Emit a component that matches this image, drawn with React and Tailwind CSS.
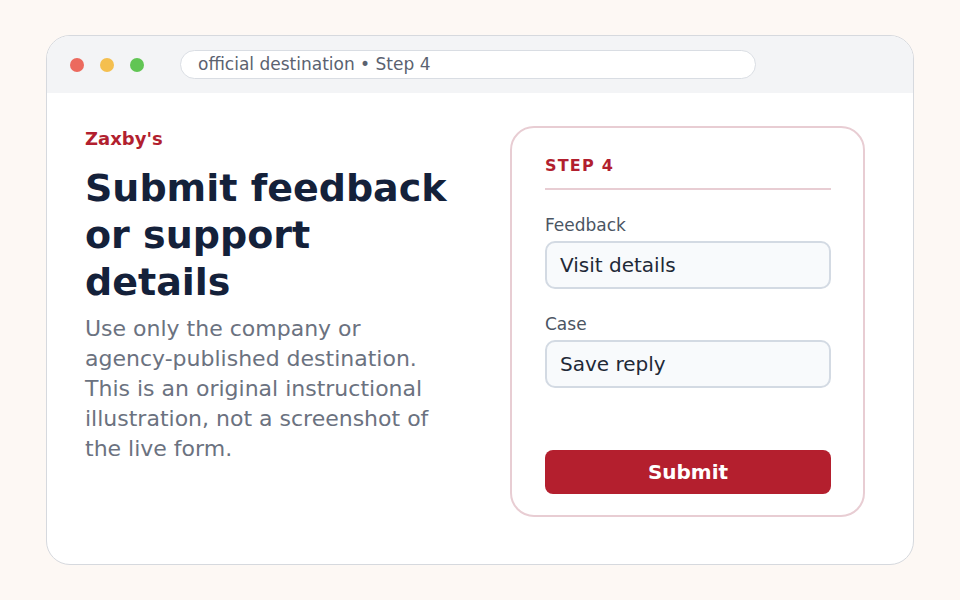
import React from "react";

const font = { fontFamily: '"DejaVu Sans", "Liberation Sans", sans-serif' };

const Field = ({ label, value, className = "" }) => (
  <div className={className}>
    <div className="text-[17px] leading-[24px] text-[#4b5563]">{label}</div>
    <div className="mt-[4px] h-[48px] rounded-[10px] border-2 border-[#d3dae3] bg-[#f8fafc] px-[13px] flex items-center text-[20px] text-[#1f2937]">
      {value}
    </div>
  </div>
);

const App = () => {
  return (
    <div
      className="w-full h-screen bg-[#fdf8f4] flex items-center justify-center"
      style={font}
    >
      <div className="w-[868px] h-[530px] rounded-[24px] border border-[#d6d9de] bg-white overflow-hidden flex flex-col">
        {/* browser bar */}
        <div className="h-[57px] bg-[#f3f4f6] flex items-center pl-[23px]">
          <div className="flex gap-[16px]">
            <span className="w-[14px] h-[14px] rounded-full bg-[#ec6a5e]" />
            <span className="w-[14px] h-[14px] rounded-full bg-[#f4bf4f]" />
            <span className="w-[14px] h-[14px] rounded-full bg-[#61c554]" />
          </div>
          <div className="ml-[36px] w-[576px] h-[29px] rounded-full bg-white border border-[#d9dde3] flex items-center pl-[17px] text-[17px] text-[#5b6270]">
            official destination • Step 4
          </div>
        </div>

        {/* content */}
        <div className="flex-1 flex justify-between pl-[38px] pr-[48px]">
          <div className="w-[364px] pt-[36px]">
            <div className="text-[18px] leading-[20px] font-bold text-[#b21f2f]">
              Zaxby's
            </div>
            <h1 className="mt-[16px] text-[38px] leading-[47px] font-bold text-[#14213a]">
              Submit feedback or support details
            </h1>
            <p className="mt-[8px] text-[22px] leading-[30px] text-[#6b7280]">
              Use only the company or agency-published destination. This is an
              original instructional illustration, not a screenshot of the live
              form.
            </p>
          </div>

          <div className="mt-[33px] w-[355px] h-[391px] rounded-[24px] border-2 border-[#e8cdd3] pl-[33px] pr-[32px] pt-[26px] pb-[21px] flex flex-col">
            <div className="pb-[10px] border-b-2 border-[#e8cdd3] text-[16px] leading-[24px] font-bold tracking-[1.2px] text-[#b21f2f]">
              STEP 4
            </div>
            <Field label="Feedback" value="Visit details" className="mt-[23px]" />
            <Field label="Case" value="Save reply" className="mt-[23px]" />
            <button className="mt-auto h-[44px] w-full rounded-[8px] bg-[#b41f2e] text-white text-[20px] font-bold">
              Submit
            </button>
          </div>
        </div>
      </div>
    </div>
  );
};

export default App;
